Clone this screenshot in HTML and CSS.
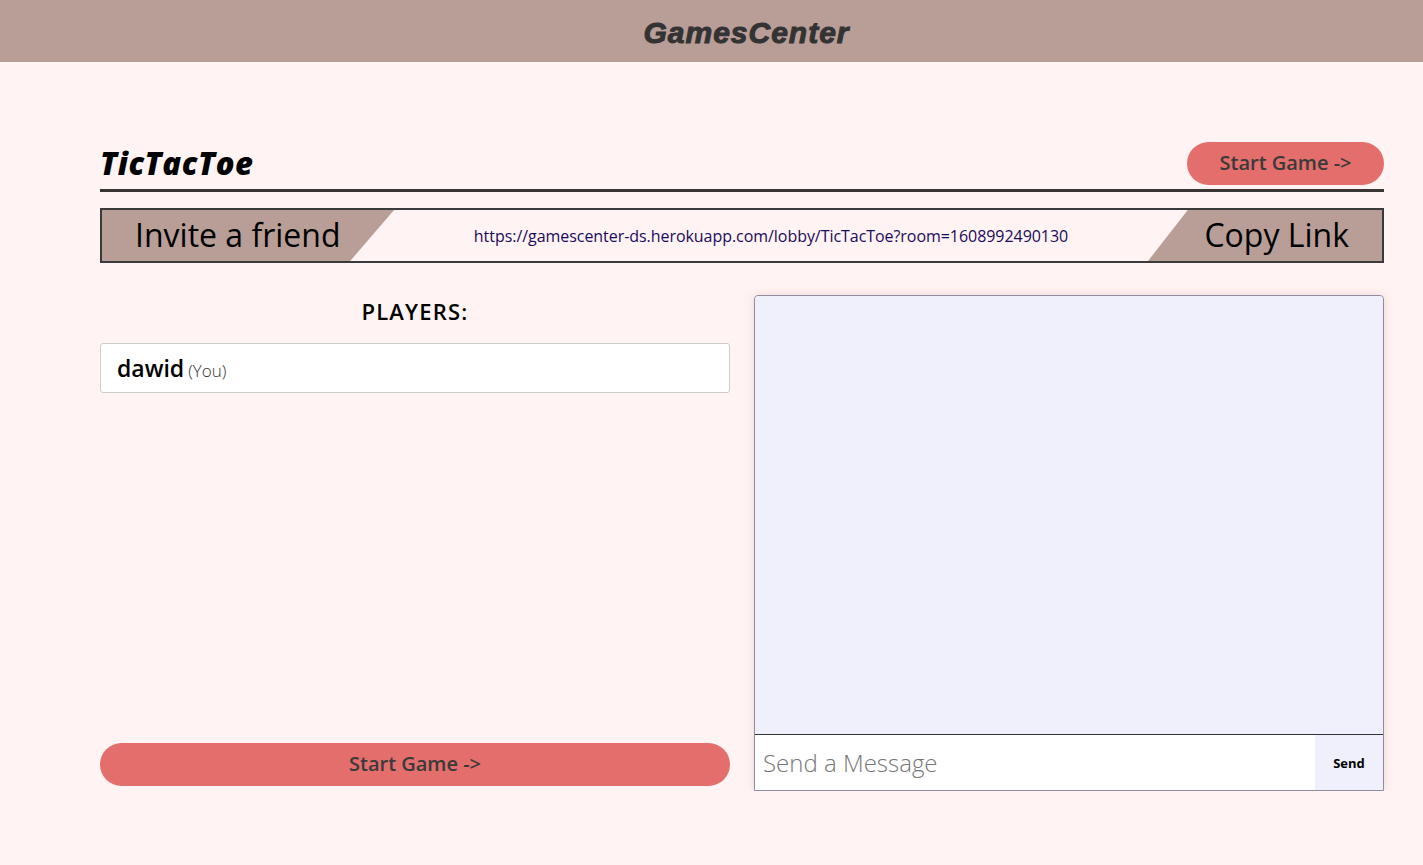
FILE: index.html
```html
<!DOCTYPE html>
<html>
<head>
<meta charset="utf-8">
<link rel="stylesheet" href="styles.css">
</head>
<body>
<header class="topbar"><span class="brand">GamesCenter</span></header>
<main class="lobby">
  <div class="title-row">
    <h1 class="game-title">TicTacToe</h1>
    <button class="start-btn small">Start Game -&gt;</button>
  </div>
  <div class="invite">
    <div class="invite-left">Invite a friend</div>
    <div class="invite-link">https://gamescenter-ds.herokuapp.com/lobby/TicTacToe?room=1608992490130</div>
    <div class="invite-right">Copy Link</div>
  </div>
  <div class="columns">
    <section class="players-col">
      <h2 class="players-title">PLAYERS:</h2>
      <div class="player-card"><span class="player-name">dawid</span> <span class="you">(You)</span></div>
      <div class="spacer"></div>
      <button class="start-btn wide">Start Game -&gt;</button>
    </section>
    <section class="chat">
      <div class="chat-messages"></div>
      <div class="chat-form">
        <input class="chat-input" type="text" placeholder="Send a Message">
        <button class="send-btn">Send</button>
      </div>
    </section>
  </div>
</main>
</body>
</html>
```
FILE: styles.css
```css
* { box-sizing: border-box; }
body {
  margin: 0;
  background: #fff4f3;
  font-family: "Open Sans", "Noto Sans", sans-serif;
  color: #000;
}
.topbar {
  height: 62px;
  background: #b99e97;
  display: flex;
  align-items: center;
  justify-content: center;
}
.brand {
  font-family: "Liberation Sans", Arial, sans-serif;
  font-weight: 700;
  font-style: italic;
  font-size: 30px;
  color: #333;
  letter-spacing: 1px;
  margin-left: 70px;
  margin-top: 4px;
  -webkit-text-stroke: 1px #333;
}
.lobby {
  width: 1284px;
  margin: 79px 0 0 100px;
}
.title-row {
  display: flex;
  justify-content: space-between;
  align-items: center;
  border-bottom: 3px solid #3a3535;
  padding-bottom: 4px;
}
.game-title {
  margin: 0;
  font-family: "Open Sans", sans-serif;
  font-weight: 800;
  font-style: italic;
  font-size: 31px;
  letter-spacing: 0.6px;
  line-height: 40px;
  margin-top: 2px;
  margin-bottom: 2px;
}
.start-btn {
  border: none;
  background: #e36e6c;
  color: #3a3a3a;
  font-family: "Open Sans", sans-serif;
  font-size: 20px;
  font-weight: 600;
  height: 43px;
  border-radius: 22px;
  padding-bottom: 3px;
  cursor: pointer;
}
.start-btn.small { width: 197px; }
.start-btn.wide { width: 630px; }
.invite {
  margin-top: 16px;
  height: 55px;
  border: 2px solid #3a3a3a;
  display: flex;
  align-items: center;
  background: #fff4f3;
}
.invite-left {
  height: 100%;
  width: 292px;
  background: #b99e97;
  clip-path: polygon(0 0, 100% 0, 85% 100%, 0 100%);
  font-size: 32px;
  padding-left: 33px;
  line-height: 50px;
  color: #000;
}
.invite-link {
  flex: 1;
  text-align: center;
  font-size: 16px;
  color: #1a0a5a;
  font-weight: 500;
  letter-spacing: -0.05px;
}
.invite-right {
  height: 100%;
  width: 234px;
  background: #b99e97;
  clip-path: polygon(17% 0, 100% 0, 100% 100%, 0 100%);
  font-size: 32px;
  line-height: 50px;
  text-align: right;
  padding-right: 33px;
}
.columns {
  display: flex;
  gap: 24px;
  margin-top: 33px;
}
.players-col {
  width: 630px;
  display: flex;
  flex-direction: column;
  height: 490px;
}
.players-title {
  margin: 0;
  text-align: center;
  font-size: 22px;
  font-weight: 600;
  letter-spacing: 1.2px;
  line-height: 30px;
}
.player-card {
  margin-top: 17px;
  height: 50px;
  background: #fff;
  border: 1px solid #ccc;
  border-radius: 3px;
  padding: 0 16px;
  display: flex;
  align-items: center;
  gap: 4px;
}
.player-name { font-size: 23px; font-weight: 600; }
.you { font-size: 17px; font-weight: 300; color: #333; margin-top: 4px; }
.spacer { flex: 1; }
.chat {
  width: 630px;
  height: 496px;
  margin-top: -1px;
  display: flex;
  flex-direction: column;
  border: 1px solid #8e8c9e;
  border-radius: 4px 4px 0 0;
  box-shadow: 0 0 8px rgba(200, 160, 160, 0.35);
}
.chat-messages {
  flex: 1;
  background: #f0f0fc;
  border-bottom: 1px solid #333;
  border-radius: 4px 4px 0 0;
}
.chat-form {
  height: 55px;
  display: flex;
}
.chat-input {
  flex: 1;
  border: none;
  background: #fff;
  font-family: "Open Sans", sans-serif;
  font-size: 24px;
  font-weight: 300;
  padding: 0 8px;
  outline: none;
}
.chat-input::placeholder { color: #777; }
.send-btn {
  width: 68px;
  border: none;
  background: #f0f0fc;
  font-family: "Open Sans", sans-serif;
  font-size: 13px;
  font-weight: 700;
  color: #000;
}
```
